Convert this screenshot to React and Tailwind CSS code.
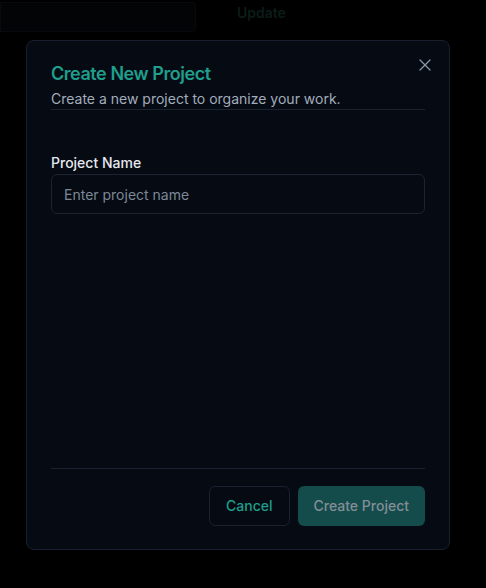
import React from "react";
import { X } from "lucide-react";

export default function App() {
  return (
    <div
      className="relative w-[486px] h-[588px] overflow-hidden bg-black"
      style={{ fontFamily: "Inter, 'Noto Sans', sans-serif" }}
    >
      {/* dimmed page behind the overlay */}
      <div className="flex items-start h-[34px]">
        <div className="w-[196px] h-[30px] mt-[2px] rounded-r-sm border border-dotted border-[#0c1014] bg-[#030405]" />
        <span className="ml-[41px] mt-[3px] text-sm leading-5 font-semibold text-[#0b1d19]">Update</span>
      </div>

      <div className="absolute left-[26px] top-[40px] w-[424px] h-[510px] flex flex-col rounded-lg border border-[#182030] bg-[#050a13] px-6 pt-6 pb-[23px]">
        <button
          type="button"
          className="absolute right-[12px] top-[12px] p-0.5 text-[#8b97a8]"
        >
          <X size={20} strokeWidth={1.5} />
        </button>

        <div className="flex flex-col gap-1.5 border-b border-[#1a2232]">
          <h2 className="text-lg leading-none font-semibold tracking-tight text-[#1f9e8b]">Create New Project</h2>
          <p className="text-sm leading-5 text-[#a3adbb]">Create a new project to organize your work.</p>
        </div>

        <div className="mt-[43px] flex flex-col gap-[1px]">
          <label className="text-sm leading-5 font-medium text-[#e5e9ef]">Project Name</label>
          <input
            type="text"
            placeholder="Enter project name"
            className="h-10 w-full rounded-md border border-[#1b2333] bg-transparent px-3 text-sm text-white placeholder:text-[#7d8896] outline-none"
          />
        </div>

        <div className="flex-1" />

        <div className="border-t border-[#1a2232] pt-[17px] flex justify-end gap-2">
          <button
            type="button"
            className="h-10 px-4 rounded-md border border-[#1a2231] text-sm font-medium text-[#1f9e8b]"
          >
            Cancel
          </button>
          <button
            type="button"
            className="h-10 px-4 rounded-md bg-[#134c4b] text-sm font-medium text-[#858d97]"
          >
            Create Project
          </button>
        </div>
      </div>
    </div>
  );
}
